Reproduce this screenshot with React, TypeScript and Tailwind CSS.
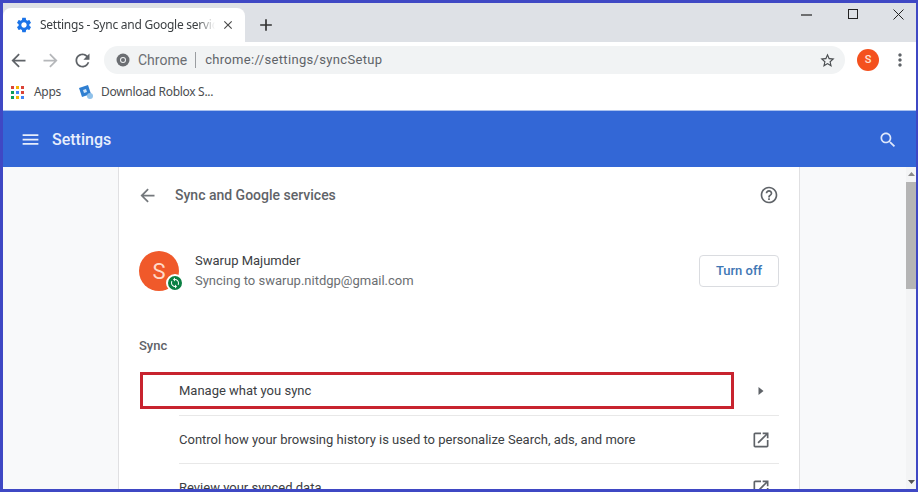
const paths = {
  back: 'M20 11H7.83l5.59-5.59L12 4l-8 8 8 8 1.41-1.41L7.83 13H20v-2z',
  forward: 'M12 4l-1.41 1.41L16.17 11H4v2h12.17l-5.58 5.59L12 20l8-8z',
  refresh: 'M17.65 6.35C16.2 4.9 14.21 4 12 4c-4.42 0-7.99 3.58-7.99 8s3.57 8 7.99 8c3.73 0 6.84-2.55 7.73-6h-2.08c-.82 2.33-3.04 4-5.65 4-3.31 0-6-2.69-6-6s2.69-6 6-6c1.66 0 3.14.69 4.22 1.78L13 11h7V4l-2.35 2.35z',
  menu: 'M3 18h18v-2H3v2zm0-5h18v-2H3v2zm0-7v2h18V6H3z',
  search: 'M15.5 14h-.79l-.28-.27C15.41 12.59 16 11.11 16 9.5 16 5.91 13.09 3 9.5 3S3 5.91 3 9.5 5.91 16 9.5 16c1.61 0 3.09-.59 4.23-1.57l.27.28v.79l5 4.99L20.49 19l-4.99-5zm-6 0C7.01 14 5 11.99 5 9.5S7.01 5 9.5 5 14 7.01 14 9.5 11.99 14 9.5 14z',
  help: 'M11 18h2v-2h-2v2zm1-16C6.48 2 2 6.48 2 12s4.48 10 10 10 10-4.48 10-10S17.52 2 12 2zm0 18c-4.41 0-8-3.59-8-8s3.59-8 8-8 8 3.59 8 8-3.59 8-8 8zm0-14c-2.21 0-4 1.79-4 4h2c0-1.1.9-2 2-2s2 .9 2 2c0 2-3 1.75-3 5h2c0-2.25 3-2.5 3-5 0-2.21-1.79-4-4-4z',
  openNew: 'M19 19H5V5h7V3H5c-1.11 0-2 .9-2 2v14c0 1.1.89 2 2 2h14c1.1 0 2-.9 2-2v-7h-2v7zM14 3v2h3.59l-9.83 9.83 1.41 1.41L19 6.41V10h2V3h-7z',
  gear: 'M19.14 12.94c.04-.3.06-.61.06-.94 0-.32-.02-.64-.07-.94l2.03-1.58c.18-.14.23-.41.12-.61l-1.92-3.32c-.12-.22-.37-.29-.59-.22l-2.39.96c-.5-.38-1.03-.7-1.62-.94l-.36-2.54c-.04-.24-.24-.41-.48-.41h-3.84c-.24 0-.43.17-.47.41l-.36 2.54c-.59.24-1.13.57-1.62.94l-2.39-.96c-.22-.08-.47 0-.59.22L2.74 8.87c-.12.21-.08.47.12.61l2.03 1.58c-.05.3-.09.63-.09.94s.02.64.07.94l-2.03 1.58c-.18.14-.23.41-.12.61l1.92 3.32c.12.22.37.29.59.22l2.39-.96c.5.38 1.03.7 1.62.94l.36 2.54c.05.24.24.41.48.41h3.84c.24 0 .44-.17.47-.41l.36-2.54c.59-.24 1.13-.56 1.62-.94l2.39.96c.22.08.47 0 .59-.22l1.92-3.32c.12-.22.07-.47-.12-.61l-2.01-1.58zM12 15.6c-1.98 0-3.6-1.62-3.6-3.6s1.62-3.6 3.6-3.6 3.6 1.62 3.6 3.6-1.62 3.6-3.6 3.6z',
  star: 'M22 9.24l-7.19-.62L12 2 9.19 8.63 2 9.24l5.46 4.73L5.82 21 12 17.27 18.18 21l-1.63-7.03L22 9.24zM12 15.4l-3.76 2.27 1-4.28-3.32-2.88 4.38-.38L12 6.1l1.71 4.04 4.38.38-3.32 2.88 1 4.28L12 15.4z',
  more: 'M12 8c1.1 0 2-.9 2-2s-.9-2-2-2-2 .9-2 2 .9 2 2 2zm0 2c-1.1 0-2 .9-2 2s.9 2 2 2 2-.9 2-2-.9-2-2-2zm0 6c-1.1 0-2 .9-2 2s.9 2 2 2 2-.9 2-2-.9-2-2-2z',
  close: 'M19 6.41L17.59 5 12 10.59 6.41 5 5 6.41 10.59 12 5 17.59 6.41 19 12 13.41 17.59 19 19 17.59 13.41 12z',
  add: 'M19 13h-6v6h-2v-6H5v-2h6V5h2v6h6v2z',
  sync: 'M12 4V1L8 5l4 4V6c3.31 0 6 2.69 6 6 0 1.01-.25 1.97-.7 2.8l1.46 1.46C19.54 15.03 20 13.57 20 12c0-4.42-3.58-8-8-8zm0 14c-3.31 0-6-2.69-6-6 0-1.01.25-1.97.7-2.8L5.24 7.74C4.46 8.97 4 10.43 4 12c0 4.42 3.58 8 8 8v3l4-4-4-4v3z',
};

const Icon = ({ name, size, className }: { name: keyof typeof paths; size: number; className?: string }) => (
  <svg width={size} height={size} viewBox="0 0 24 24" fill="currentColor" className={`shrink-0 ${className ?? ''}`}>
    <path d={paths[name]} />
  </svg>
);

const appDots = ['#db4437', '#f4b400', '#db4437', '#0f9d58', '#4285f4', '#db4437', '#0f9d58', '#f4b400', '#4285f4'];

const SettingRow = ({ label, icon, divider }: { label: string; icon: React.ReactNode; divider?: boolean }) => (
  <div className="flex h-12 shrink-0 pl-10">
    <div className={`flex h-full flex-1 items-center justify-between ${divider ? 'border-t border-[#e8e8e8]' : ''}`}>
      <span className="text-[13px] text-[#3c4043]">{label}</span>
      <span className="mr-[8px] flex w-5 justify-center">{icon}</span>
    </div>
  </div>
);

export default function App() {
  return (
    <div className="flex h-[492px] w-[918px] flex-col overflow-hidden border-[3px] border-r-2 border-[#3f48c4] bg-white font-['Roboto',sans-serif]">
      {/* tab strip */}
      <div className="flex h-[39px] shrink-0 items-end bg-[#dee1e6]">
        <div className="flex h-[34px] w-[242px] items-center rounded-t-lg bg-white pl-[12px]">
          <Icon name="gear" size={18} className="text-[#1a73e8]" />
          <span className="ml-[7px] w-[175px] overflow-hidden whitespace-nowrap font-['Noto_Sans',sans-serif] text-xs tracking-[-0.25px] text-[#3c4043] [mask-image:linear-gradient(to_right,black_90%,transparent)]">
            Settings - Sync and Google services
          </span>
          <Icon name="close" size={14} className="ml-[6px] text-[#4a4a4a]" />
        </div>
        <div className="ml-[11px] flex h-[34px] items-center">
          <Icon name="add" size={20} className="text-[#333]" />
        </div>
        <div className="ml-auto flex h-full items-start text-[#222]">
          <svg width="11" height="2" viewBox="0 0 11 2" className="mr-[36px] mt-[11px]">
            <path d="M0 1 H11" stroke="currentColor" strokeWidth="1.2" />
          </svg>
          <svg width="10" height="10" viewBox="0 0 10 10" className="mr-[35px] mt-[6px]">
            <rect x="0.5" y="0.5" width="9" height="9" fill="none" stroke="currentColor" strokeWidth="1" />
          </svg>
          <svg width="11" height="11" viewBox="0 0 11 11" className="mr-[12px] mt-[6px]">
            <path d="M0.5 0.5 L10.5 10.5 M10.5 0.5 L0.5 10.5" stroke="currentColor" strokeWidth="1" />
          </svg>
        </div>
      </div>

      {/* toolbar */}
      <div className="flex h-[32px] shrink-0 items-end bg-white">
        <div className="flex h-[28px] items-center pl-[5px]">
          <Icon name="back" size={21} className="text-[#5f6368]" />
          <Icon name="forward" size={21} className="ml-[11px] text-[#b5b7ba]" />
          <Icon name="refresh" size={21} className="ml-[11px] text-[#5f6368]" />
        </div>
        <div className="ml-[11px] flex h-[28px] w-[741px] items-center rounded-full bg-[#f1f3f4] pl-[12px] pr-[8px]">
          <svg width="14" height="14" viewBox="0 0 14 14" className="shrink-0">
            <circle cx="7" cy="7" r="6.5" fill="#6b6e72" />
            <circle cx="7" cy="7" r="3" fill="#f1f3f4" />
            <circle cx="7" cy="7" r="2" fill="#6b6e72" />
          </svg>
          <span className="ml-[8px] text-sm text-[#6b6e72]">Chrome</span>
          <span className="ml-[8px] mr-[9px] h-[16px] w-px bg-[#9a9da1]" />
          <span className="text-[13px] tracking-[0.33px] text-[#5f6368]">chrome://settings/syncSetup</span>
          <Icon name="star" size={17} className="ml-auto mr-[1px] text-[#4a4d50]" />
        </div>
        <div className="flex h-[28px] items-center">
          <span className="ml-[12px] flex h-[22px] w-[22px] items-center justify-center rounded-full bg-[#f4511e] text-[11px] font-medium text-[#ffe3d6]">S</span>
          <Icon name="more" size={20} className="ml-[11px] text-[#5f6368]" />
        </div>
      </div>

      {/* bookmarks */}
      <div className="flex h-[36px] shrink-0 items-center bg-white pl-[8px] font-['Noto_Sans',sans-serif] text-xs tracking-[-0.3px] text-[#4a4d50]">
        <div className="grid grid-cols-3 gap-[2px]">
          {appDots.map((c, i) => (
            <span key={i} className="h-[3px] w-[3px]" style={{ backgroundColor: c }} />
          ))}
        </div>
        <span className="ml-[10px]">Apps</span>
        <svg width="16" height="16" viewBox="0 0 16 16" className="ml-[17px]">
          <path d="M1 4 L10 1 L13 10 L4 13 Z" fill="#2f7fd1" />
          <path d="M5 6 L8 5 L9 8 L6 9 Z" fill="#cfe4f7" />
          <circle cx="12" cy="12" r="3" fill="#8fc1ea" />
        </svg>
        <span className="ml-[7px]">Download Roblox S...</span>
      </div>

      {/* settings bar */}
      <div className="flex h-[57px] shrink-0 items-center justify-between border-t border-[#a9c0ee] bg-[#3367d6] pl-[17px] pr-[18px] pt-[1px] text-white">
        <div className="flex items-center">
          <Icon name="menu" size={21} className="text-[#e8eefc]" />
          <span className="ml-[11px] text-base font-medium text-[#e8eefc]">Settings</span>
        </div>
        <Icon name="search" size={20} className="text-[#dfe8fb]" />
      </div>

      {/* content */}
      <div className="flex min-h-0 flex-1 bg-[#f8f9fa]">
        <div className="flex min-h-0 flex-1 justify-start pl-[115px]">
          <div className="flex h-full w-[682px] shrink-0 flex-col overflow-hidden border-x border-[#e0e0e2] bg-white px-[20px]">
            <div className="flex h-[56px] shrink-0 items-center">
              <Icon name="back" size={21} className="-ml-[2px] text-[#74787c]" />
              <span className="ml-[17px] text-sm font-medium text-[#5f6368]">Sync and Google services</span>
              <Icon name="help" size={20} className="ml-auto text-[#5f6368]" />
            </div>

            <div className="mt-[28px] flex h-[40px] shrink-0 items-center">
              <div className="relative h-[40px] w-[40px] shrink-0">
                <div className="flex h-full w-full items-center justify-center rounded-full bg-[#f0592a] text-[22px] text-[#ffd9c9]">S</div>
                <span className="absolute bottom-[-1px] right-[-5px] flex h-[18px] w-[18px] items-center justify-center rounded-full border-2 border-white bg-[#0b8043]">
                  <Icon name="sync" size={12} className="text-white" />
                </span>
              </div>
              <div className="ml-[16px] -mt-[2px] flex flex-col gap-[3px] text-[13px] leading-[17px]">
                <span className="text-[#3c4043]">Swarup Majumder</span>
                <span className="text-[#6b6e72]">Syncing to swarup.nitdgp@gmail.com</span>
              </div>
              <button className="ml-auto h-[32px] w-[80px] rounded border border-[#dadce0] bg-white text-[13px] font-medium text-[#3f77b5]">
                Turn off
              </button>
            </div>

            <div className="mt-[46px] shrink-0 text-[13px] font-medium leading-[18px] text-[#5f6368]">Sync</div>

            <div className="relative mt-[12px] flex flex-col">
              <span className="absolute left-[1px] top-[5px] h-[37px] w-[594px] border-[3px] border-[#c8232f]" />
              <SettingRow
                label="Manage what you sync"
                icon={
                  <svg width="6" height="8" viewBox="0 0 6 8">
                    <path d="M0.5 0 L5.5 4 L0.5 8 Z" fill="#5f6368" />
                  </svg>
                }
              />
              <SettingRow label="Control how your browsing history is used to personalize Search, ads, and more" icon={<Icon name="openNew" size={20} className="text-[#5f6368]" />} divider />
              <SettingRow label="Review your synced data" icon={<Icon name="openNew" size={20} className="text-[#5f6368]" />} divider />
            </div>
          </div>
        </div>

        {/* scrollbar */}
        <div className="flex h-full w-[10px] shrink-0 flex-col items-center bg-[#f3f4f5]">
          <svg width="7" height="4" viewBox="0 0 7 4" className="mt-[5px]">
            <path d="M0 4 L3.5 0 L7 4 Z" fill="#8a8a8a" />
          </svg>
          <div className="mt-[6px] h-[107px] w-full bg-[#b5b5b5]" />
          <svg width="7" height="4" viewBox="0 0 7 4" className="mb-[5px] mt-auto">
            <path d="M0 0 L3.5 4 L7 0 Z" fill="#555" />
          </svg>
        </div>
      </div>
    </div>
  );
}
